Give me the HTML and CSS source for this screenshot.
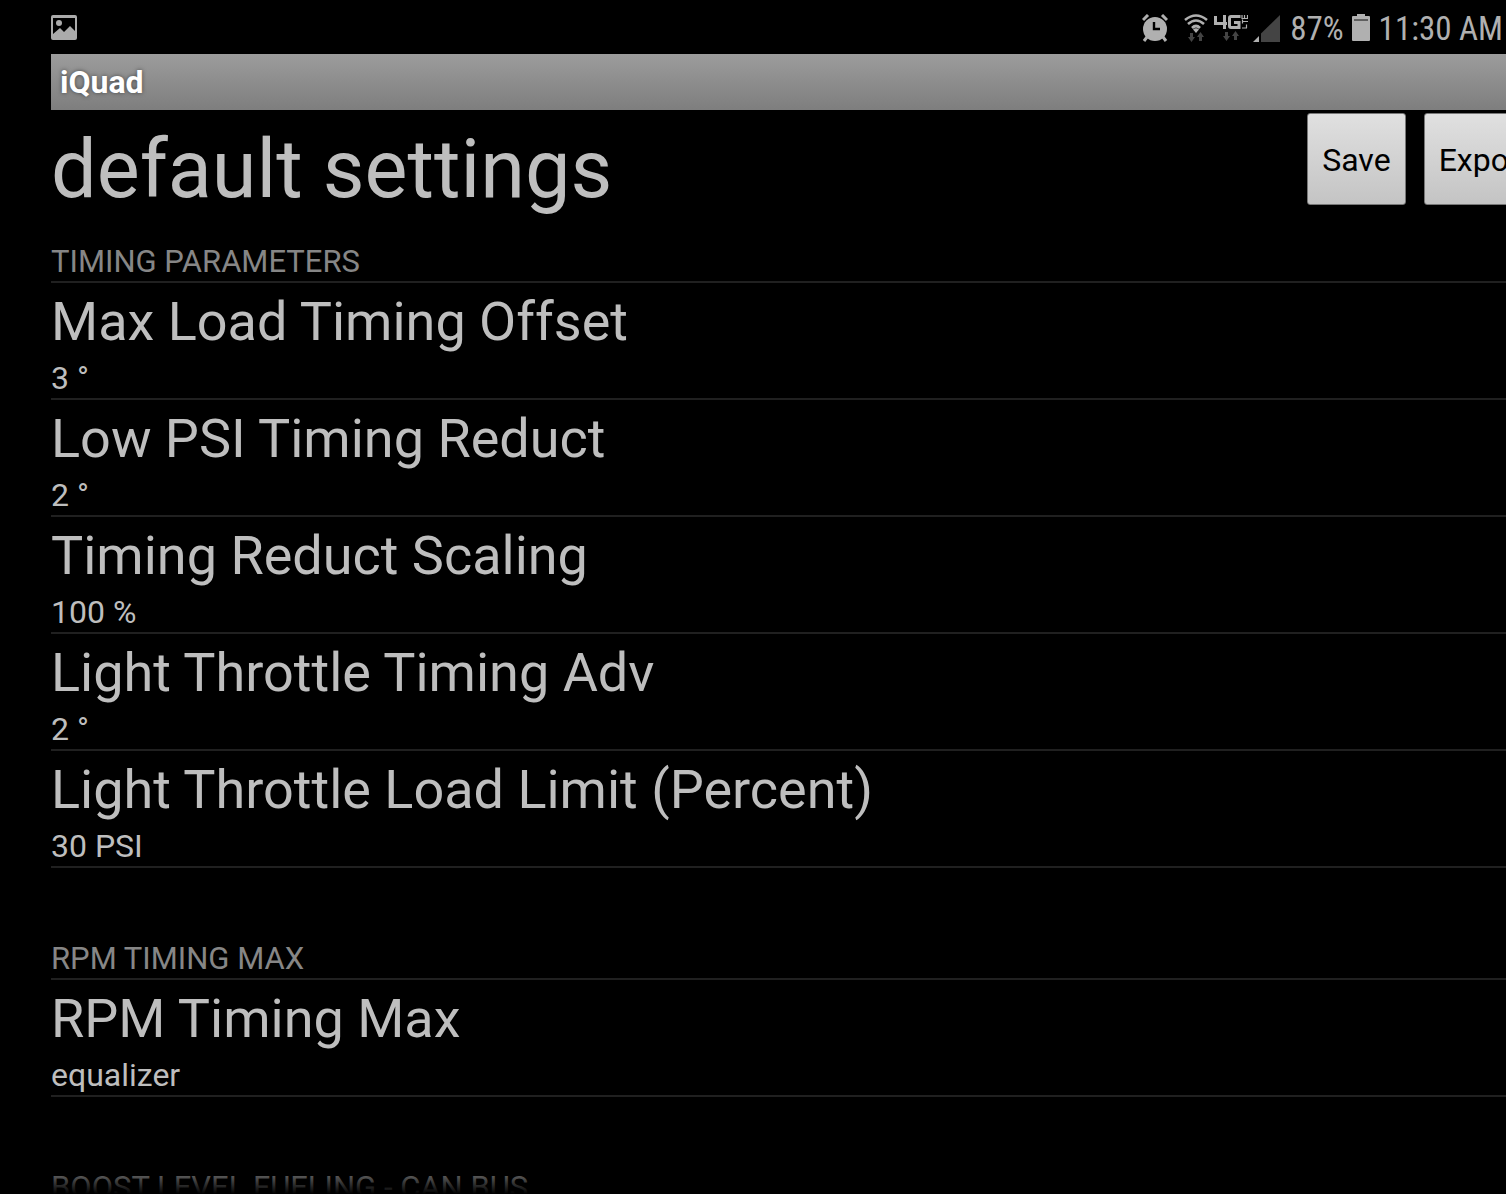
FILE: index.html
```html
<!DOCTYPE html>
<html lang="en">
<head>
  <meta charset="UTF-8" />
  <meta name="viewport" content="width=device-width, initial-scale=1.0"/>
  <title>iQuad</title>
  <link rel="stylesheet" href="styles.css">
</head>
<body>
  <div class="status-bar">
    <svg class="icon-picture" width="26" height="26" viewBox="0 0 26 26" aria-hidden="true">
      <path fill="#ababab" fill-rule="evenodd" d="M2 0H24Q26 0 26 2V23Q26 25 24 25H2Q0 25 0 23V2Q0 0 2 0ZM2 3V19L9 13L13 17L19 11L24 16V3Z"/>
      <circle cx="8" cy="8" r="3" fill="#ababab"/>
    </svg>
    <div class="status-icons">
      <svg width="26" height="28" viewBox="0 0 26 28" aria-hidden="true">
        <circle cx="13" cy="15" r="12" fill="#b0b0b0"/>
        <path d="M1 6L6 1M25 6L20 1M5 23L2 27M21 23L24 27" stroke="#b0b0b0" stroke-width="3" fill="none"/>
        <path d="M12 8V15H18" stroke="#000" stroke-width="2.4" fill="none"/>
      </svg>
      <svg class="icon-wifi" width="24" height="28" viewBox="0 0 24 28" aria-hidden="true">
        <g fill="none" stroke="#b0b0b0" stroke-width="2.6">
          <path d="M1 6Q12 -3 23 6"/>
          <path d="M4 10Q12 3 20 10"/>
          <path d="M8 14Q12 10 16 14"/>
        </g>
        <path d="M9 15.500Q12 13 15 15.500L12 19Z" fill="#b0b0b0"/>
        <path d="M6 19H9V23H11L7.500 28L4 23H6ZM15 27H18V23H20L16.500 18L13 23H15Z" fill="#444"/>
      </svg>
      <svg class="icon-4g" width="34" height="28" viewBox="0 0 34 28" aria-hidden="true">
        <g fill="none" stroke="#b0b0b0">
          <path d="M1.500 2V9.500H13M10.500 1V15" stroke-width="3"/>
          <path d="M26.500 2.500H17Q15.500 2.500 15.500 4V12Q15.500 13.500 17 13.500H25V8.500H20" stroke-width="3"/>
          <path d="M28 14H33M32.500 14V10.500M28 7.500H34M28.500 9.500V5.500M28 1V4.500H33.500V1M30.500 4V1" stroke-width="1.200"/>
        </g>
        <path d="M11 18H14V22H16L12.500 27L9 22H11ZM20 26H23V22H25L21.500 17L18 22H20Z" fill="#444"/>
      </svg>
      <svg class="icon-signal" width="27" height="28" viewBox="0 0 27 28" aria-hidden="true">
        <path d="M8 19.500L27 1V28H8Z" fill="#444"/>
        <path d="M0 28L6 22V28Z" fill="#b0b0b0"/>
      </svg>
      <span class="status-text">87%</span>
      <svg class="icon-battery" width="18" height="28" viewBox="0 0 18 28" aria-hidden="true">
        <path d="M5 0H13V2H17Q18 2 18 3V26Q18 27 17 27H1Q0 27 0 26V3Q0 2 1 2H5Z" fill="#b0b0b0"/>
        <path d="M2 6H16" stroke="#444" stroke-width="1.500"/>
      </svg>
      <span class="status-text">11:30 AM</span>
    </div>
  </div>

  <div class="app">
    <div class="title-bar">iQuad</div>

    <header class="page-header">
      <h1>default settings</h1>
      <div class="actions">
        <button type="button">Save</button>
        <button type="button">Export</button>
      </div>
    </header>

    <main>
      <section>
        <h2>TIMING PARAMETERS</h2>
        <ul>
          <li><h3>Max Load Timing Offset</h3><p>3 °</p></li>
          <li><h3>Low PSI Timing Reduct</h3><p>2 °</p></li>
          <li><h3>Timing Reduct Scaling</h3><p>100 %</p></li>
          <li><h3>Light Throttle Timing Adv</h3><p>2 °</p></li>
          <li><h3>Light Throttle Load Limit (Percent)</h3><p>30 PSI</p></li>
        </ul>
      </section>

      <section>
        <h2>RPM TIMING MAX</h2>
        <ul>
          <li><h3>RPM Timing Max</h3><p>equalizer</p></li>
        </ul>
      </section>

      <section>
        <h2>BOOST LEVEL FUELING - CAN BUS</h2>
      </section>
    </main>
  </div>
</body>
</html>
```

FILE: styles.css
```css
* {
  box-sizing: border-box;
}

body {
  margin: 0;
  height: 100vh;
  display: flex;
  flex-direction: column;
  overflow: hidden;
  background-color: #000;
  color: #bebebe; /* light grey */
  font-family: Roboto, sans-serif;
  font-size: 32px;
}

h1, h2, h3, p, ul {
  margin: 0;
  padding: 0;
  font-weight: normal;
}

ul {
  list-style: none;
}

/* phone status bar */
.status-bar {
  flex: none;
  display: flex;
  align-items: center;
  justify-content: space-between;
  height: 54px;
  padding: 2px 3px 0 51px;
}

.status-icons {
  display: flex;
  align-items: center;
  color: #b0b0b0;
}

.status-text {
  font-family: "Roboto Condensed", Roboto, sans-serif;
  font-size: 33px;
  line-height: 52px;
  padding-top: 2px;
  white-space: nowrap;
}

.icon-wifi {
  margin-left: 16px;
}

.icon-4g {
  margin-left: 6px;
}

.icon-signal {
  margin: 0 10px 0 5px;
}

.icon-battery {
  margin: 0 9px 0 8px;
}

/* app window */
.app {
  flex: 1;
  min-height: 0;
  display: flex;
  flex-direction: column;
  margin-left: 51px;
}

.title-bar {
  flex: none;
  height: 56px;
  padding-left: 9px;
  line-height: 56px;
  font-weight: bold;
  font-size: 32px;
  color: #fff;
  background: linear-gradient(#9c9c9c, #7e7e7e);
  text-shadow: 0 0 4px #444;
}

.page-header {
  flex: none;
  display: flex;
  justify-content: space-between;
  align-items: flex-start;
  height: 132px;
  padding-top: 3px;
}

h1 {
  font-size: 81px;
  line-height: 114px;
  white-space: nowrap;
}

/* the last button runs off the right edge */
.actions {
  display: flex;
  gap: 18px;
  margin-right: -40px;
}

button {
  height: 92px;
  padding: 2px 14px 0;
  border: 1px solid #777;
  border-radius: 3px;
  background: linear-gradient(#e0e0e0, #c4c4c4);
  color: #000;
  font-family: inherit;
  font-size: 32px;
}

main {
  position: relative;
  flex: 1;
  min-height: 0;
  overflow: hidden;
}

/* list fades out at the bottom */
main::after {
  content: "";
  position: absolute;
  left: 0;
  right: 0;
  bottom: 0;
  height: 28px;
  background: linear-gradient(transparent, #000);
}

section {
  margin-bottom: 71px;
}

h2 {
  height: 41px;
  border-bottom: 2px solid #202020;
  font-size: 31px;
  line-height: 40px;
  color: #868686;
}

li {
  border-bottom: 2px solid #202020;
}

h3 {
  font-size: 54px;
  line-height: 77px;
}

p {
  padding-bottom: 2px;
  line-height: 36px;
}
```
